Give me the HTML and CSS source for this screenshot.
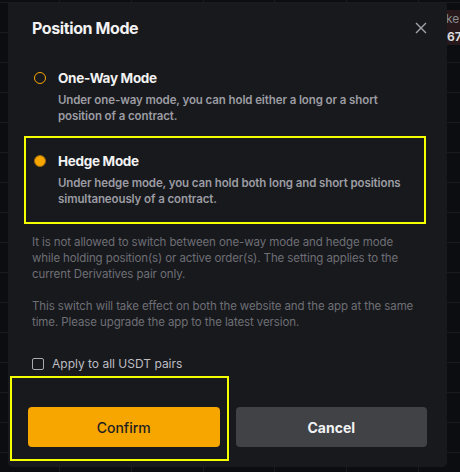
FILE: index.html
```html
<!DOCTYPE html>
<html lang="en">
<head>
<meta charset="utf-8">
<title>Position Mode</title>
<link rel="stylesheet" href="styles.css">
</head>
<body>
<div class="chart-edge">
  <span class="edge-label">ke</span>
  <span class="edge-price">67</span>
</div>
<div class="modal">
  <div class="modal-head">
    <h1 class="modal-title">Position Mode</h1>
    <button class="close" aria-label="Close">
      <svg width="12" height="12" viewBox="0 0 12 12"><path d="M1 1L11 11M11 1L1 11" stroke="#a4a5aa" stroke-width="1.4" fill="none"/></svg>
    </button>
  </div>
  <div class="options">
    <div class="option option-first">
      <span class="radio"></span>
      <div class="option-body">
        <div class="option-title">One-Way Mode</div>
        <div class="option-desc">Under one-way mode, you can hold either a long or a short position of a contract.</div>
      </div>
    </div>
    <div class="option option-marked">
      <span class="radio radio-on"></span>
      <div class="option-body">
        <div class="option-title">Hedge Mode</div>
        <div class="option-desc">Under hedge mode, you can hold both long and short positions simultaneously of a contract.</div>
      </div>
    </div>
  </div>
  <p class="note">It is not allowed to switch between one-way mode and hedge mode while holding position(s) or active order(s). The setting applies to the current Derivatives pair only.</p>
  <p class="note">This switch will take effect on both the website and the app at the same time. Please upgrade the app to the latest version.</p>
  <label class="check"><span class="box"></span>Apply to all USDT pairs</label>
  <div class="actions">
    <div class="mark-confirm"></div>
    <button class="btn btn-confirm">Confirm</button>
    <button class="btn btn-cancel">Cancel</button>
  </div>
</div>
</body>
</html>
```
FILE: styles.css
```css
html, body {
  margin: 0;
  padding: 0;
}
body {
  width: 460px;
  height: 472px;
  overflow: hidden;
  position: relative;
  background-color: #0c0d10;
  background-image:
    repeating-linear-gradient(to bottom, transparent 0, transparent 2px, #1a1b1f 2px, #1a1b1f 3px, transparent 3px, transparent 30px),
    repeating-linear-gradient(to right, transparent 0, transparent 59px, #1a1b1f 59px, #1a1b1f 60px, transparent 60px, transparent 71.8px);
  font-family: "Inter", "Noto Sans", sans-serif;
  padding-top: 3px;
  padding-left: 8px;
  box-sizing: border-box;
}
.chart-edge {
  position: absolute;
  left: 447px;
  top: 10px;
  width: 13px;
  height: 35px;
  background: #26181b;
  overflow: hidden;
}
.edge-label {
  position: absolute;
  left: -1px;
  top: 2px;
  font-size: 12px;
  line-height: 14px;
  color: #8a8b90;
  white-space: nowrap;
}
.edge-price {
  position: absolute;
  left: 0;
  top: 20px;
  font-size: 12px;
  line-height: 14px;
  font-weight: 700;
  color: #d8d8da;
  white-space: nowrap;
}
.modal {
  width: 439px;
  height: 464px;
  box-sizing: border-box;
  background: #18191d;
  border-radius: 0 0 5px 5px;
  padding: 11px 20px 20px 20px;
  display: flex;
  flex-direction: column;
  position: relative;
}
.modal-head {
  display: flex;
  justify-content: space-between;
  align-items: center;
  padding-left: 4px;
  height: 28px;
}
.modal-title {
  margin: 0;
  font-size: 16px;
  font-weight: 700;
  color: #f2f2f3;
  letter-spacing: -0.4px;
}
.close {
  background: none;
  border: 0;
  padding: 0;
  width: 12px;
  height: 12px;
  display: flex;
}
.options {
  margin-top: 11px;
  margin-left: -4px;
  display: flex;
  flex-direction: column;
}
.option {
  display: flex;
  gap: 12px;
  padding: 14px 14px 12px 8px;
  border: 2px solid transparent;
  width: 402px;
  box-sizing: border-box;
}
.option-first {
  padding-bottom: 10px;
}
.option-marked {
  border-color: #f4ff00;
  padding-bottom: 15px;
}
.radio {
  flex: none;
  width: 12px;
  height: 12px;
  margin-top: 3px;
  box-sizing: border-box;
  border: 1.5px solid #f7a600;
  border-radius: 50%;
}
.radio-on {
  background: #f7a600;
  border: 1px solid #9c6a0a;
}
.option-title {
  font-size: 13.5px;
  font-weight: 700;
  color: #f2f2f3;
  line-height: 18px;
  letter-spacing: -0.3px;
}
.option-desc {
  margin-top: 5px;
  font-size: 11.5px;
  font-weight: 600;
  color: #9c9ca3;
  line-height: 16px;
  letter-spacing: -0.1px;
}
.note {
  width: 390px;
  margin: 0 0 16px 4px;
  font-size: 11.5px;
  line-height: 16px;
  color: #6e6f75;
  letter-spacing: -0.1px;
}
.options + .note {
  margin-top: 10px;
}
.check {
  display: flex;
  align-items: center;
  gap: 8px;
  margin: 10px 0 0 4px;
  font-size: 12px;
  color: #bdbdc2;
}
.box {
  width: 12px;
  height: 12px;
  box-sizing: border-box;
  border: 1px solid #a9aaae;
  border-radius: 2px;
}
.actions {
  margin-top: auto;
  display: flex;
  gap: 16px;
  position: relative;
}
.mark-confirm {
  position: absolute;
  left: -18px;
  top: -31px;
  width: 219px;
  height: 85px;
  box-sizing: border-box;
  border: 2px solid #f4ff00;
  pointer-events: none;
}
.btn {
  flex: 1;
  height: 40px;
  border: 0;
  border-radius: 4px;
  font-family: inherit;
  font-size: 14px;
  cursor: pointer;
}
.btn-confirm {
  background: #f7a600;
  color: #1e1e20;
  font-weight: 500;
}
.btn-cancel {
  background: #404246;
  color: #f2f2f3;
  font-weight: 700;
}
```
